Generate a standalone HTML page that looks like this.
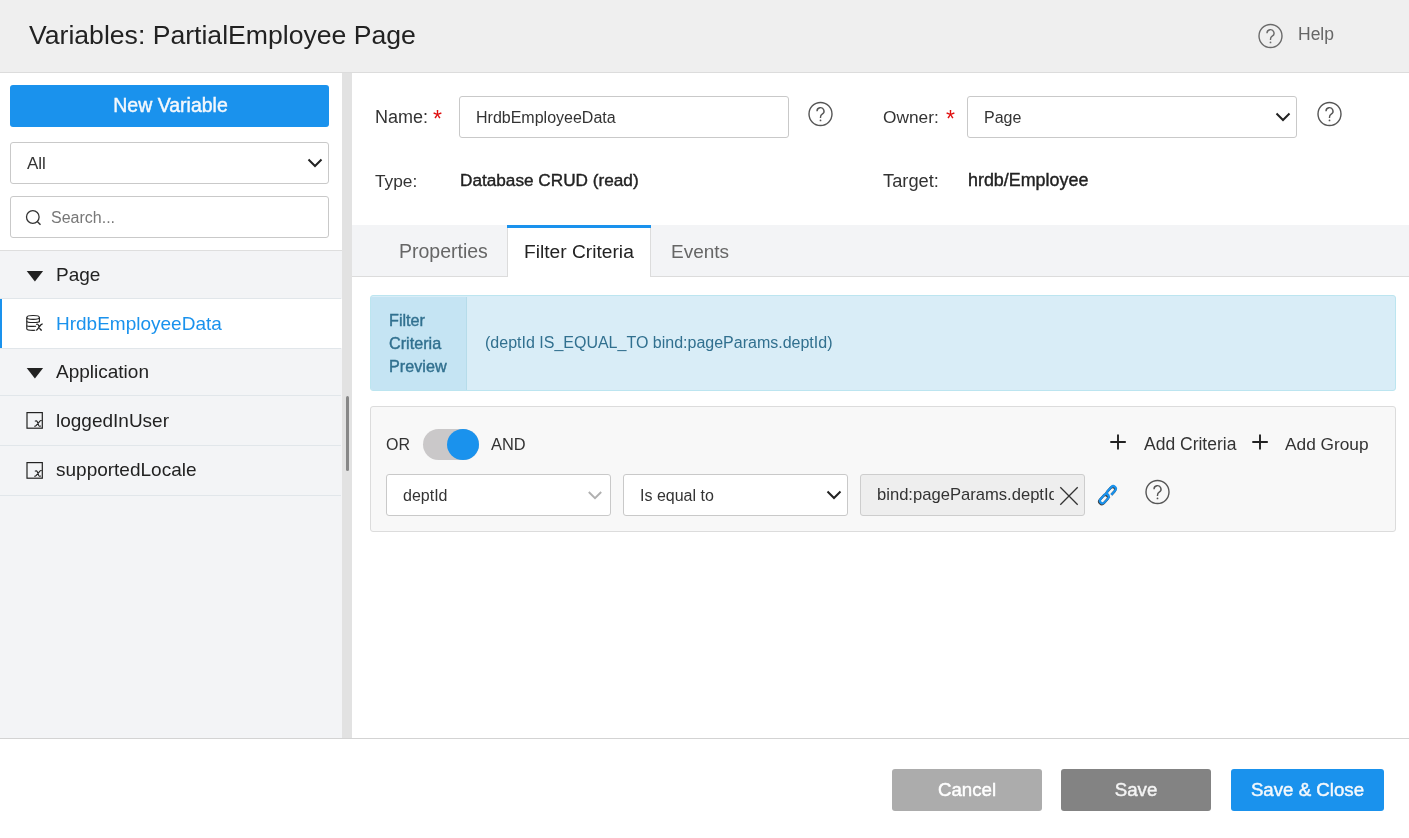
<!DOCTYPE html>
<html><head><meta charset="utf-8">
<style>
*{margin:0;padding:0;box-sizing:border-box}
html,body{width:1409px;height:838px;overflow:hidden;background:#fff;font-family:"Liberation Sans",sans-serif;color:#222}
.a{position:absolute}
.t{position:absolute;line-height:1;white-space:nowrap;will-change:transform}
</style></head><body>
<!-- header -->
<div class="a" style="left:0;top:0;width:1409px;height:73px;background:#efefef;border-bottom:1px solid #dcdcdc"></div>
<div class="t" style="left:28.5px;top:21.9px;font-size:26.6px;color:#222">Variables: PartialEmployee Page</div>
<svg class="a" style="left:1256px;top:22px" width="29" height="28" viewBox="0 0 29 28"><circle cx="14.5" cy="14" r="11.5" fill="none" stroke="#6a6a6a" stroke-width="1.4"/><path d="M11 11.2a3.5 3.5 0 1 1 5.2 3c-1.3.8-1.7 1.4-1.7 3v.8" fill="none" stroke="#6a6a6a" stroke-width="1.4"/><circle cx="14.5" cy="20.4" r="0.9" fill="#6a6a6a"/></svg>
<div class="t" style="left:1297.5px;top:26px;font-size:17.5px;color:#666">Help</div>

<!-- sidebar -->
<div class="a" style="left:10px;top:85px;width:319px;height:42px;background:#1a92ed;border-radius:3px"></div>
<div class="t" style="left:10.5px;top:95.5px;width:319px;text-align:center;font-size:19.5px;color:#f4f8fc;-webkit-text-stroke:0.45px #f4f8fc">New Variable</div>

<div class="a" style="left:10px;top:142px;width:319px;height:42px;border:1px solid #c9c9c9;border-radius:3px;background:#fff"></div>
<div class="t" style="left:26.5px;top:154.6px;font-size:17px;color:#333">All</div>
<svg class="a" style="left:306px;top:156px" width="18" height="14" viewBox="0 0 18 14"><path d="M2.5 3.5l6.5 6.5 6.5-6.5" fill="none" stroke="#222" stroke-width="2"/></svg>

<div class="a" style="left:10px;top:196px;width:319px;height:42px;border:1px solid #c9c9c9;border-radius:3px;background:#fff"></div>
<svg class="a" style="left:24px;top:208px" width="20" height="20" viewBox="0 0 20 20"><circle cx="8.8" cy="9" r="6.3" fill="none" stroke="#333" stroke-width="1.3"/><path d="M13.3 13.5l3.2 3.2" stroke="#333" stroke-width="1.4"/></svg>
<div class="t" style="left:51.4px;top:209.8px;font-size:16px;color:#777">Search...</div>

<div class="a" style="left:0;top:250px;width:342px;height:488px;background:#f3f4f6;border-top:1px solid #dedede"></div>
<!-- rows -->
<div class="a" style="left:0;top:298px;width:341px;height:1px;background:#e1e6ea"></div>
<div class="a" style="left:0;top:299px;width:342px;height:49px;background:#fff"></div>
<div class="a" style="left:0;top:299px;width:2px;height:49px;background:#1a92ed"></div>
<div class="a" style="left:0;top:348px;width:341px;height:1px;background:#e1e6ea"></div>
<div class="a" style="left:0;top:395px;width:341px;height:1px;background:#e1e6ea"></div>
<div class="a" style="left:0;top:445px;width:341px;height:1px;background:#e1e6ea"></div>
<div class="a" style="left:0;top:495px;width:341px;height:1px;background:#e1e6ea"></div>

<svg class="a" style="left:26px;top:270px" width="18" height="13" viewBox="0 0 18 13"><path d="M0.7 1h16.4l-8.2 10.6z" fill="#222"/></svg>
<div class="t" style="left:55.5px;top:264.7px;font-size:19px;color:#222">Page</div>

<svg class="a" style="left:24px;top:313px" width="22" height="20" viewBox="0 0 22 20"><g fill="none" stroke="#222" stroke-width="1.15"><ellipse cx="9.1" cy="4.4" rx="6.3" ry="1.9"/><path d="M2.8 4.4V16.1c0 .7 2.8 1.3 6.3 1.3 .8 0 1.5 0 2.2-.1"/><path d="M15.4 4.4V9.2"/><path d="M2.8 8.2c0 .7 2.8 1.3 6.3 1.3s6.3-.6 6.3-1.3"/><path d="M2.8 12.4c0 .6 2.8 1 6.3 1 1.2 0 2.2 0 3-.1"/></g><path d="M12.2 11.6c.9-.6 1.8-.5 2.3.6l1.6 3.8c.4.9 1 1.2 1.9 1.1M18.7 11.2c-.7-.2-1.3.1-2 .8l-3.3 4.3c-.4.6-.8.8-1.4.8" fill="none" stroke="#222" stroke-width="1.25"/></svg>
<div class="t" style="left:55.5px;top:313.5px;font-size:19px;color:#1a92ed">HrdbEmployeeData</div>

<svg class="a" style="left:26px;top:367px" width="18" height="13" viewBox="0 0 18 13"><path d="M0.7 1h16.4l-8.2 10.6z" fill="#222"/></svg>
<div class="t" style="left:55.5px;top:361.6px;font-size:19px;color:#222">Application</div>

<svg class="a" style="left:25px;top:411px" width="20" height="20" viewBox="0 0 20 20"><rect x="2" y="1.6" width="15.3" height="15.6" fill="none" stroke="#222" stroke-width="1.2"/><path d="M9.9 10.4C10.9 9.5 11.9 9.6 12.4 11L13.6 14.3C14 15.3 14.8 15.5 15.7 14.8M16.7 9.7C15.9 9.3 15.1 9.8 14.3 10.8L11.3 14.4C10.7 15.2 10.1 15.5 9.3 15.1" fill="none" stroke="#222" stroke-width="1.1"/></svg>
<div class="t" style="left:55.5px;top:410.8px;font-size:19px;color:#222">loggedInUser</div>

<svg class="a" style="left:25px;top:461px" width="20" height="20" viewBox="0 0 20 20"><rect x="2" y="1.6" width="15.3" height="15.6" fill="none" stroke="#222" stroke-width="1.2"/><path d="M9.9 10.4C10.9 9.5 11.9 9.6 12.4 11L13.6 14.3C14 15.3 14.8 15.5 15.7 14.8M16.7 9.7C15.9 9.3 15.1 9.8 14.3 10.8L11.3 14.4C10.7 15.2 10.1 15.5 9.3 15.1" fill="none" stroke="#222" stroke-width="1.1"/></svg>
<div class="t" style="left:55.5px;top:460px;font-size:19px;color:#222">supportedLocale</div>

<!-- divider -->
<div class="a" style="left:342px;top:73px;width:10px;height:665px;background:#e2e2e2"></div>
<div class="a" style="left:346px;top:396px;width:3.2px;height:75px;background:#878787;border-radius:1.6px"></div>

<!-- footer -->
<div class="a" style="left:0;top:738px;width:1409px;height:100px;background:#fff;border-top:1px solid #d3d3d3"></div>

<!-- main top fields -->
<div class="t" style="left:374.6px;top:108.1px;font-size:18px;color:#333">Name:</div>
<div class="t" style="left:433.2px;top:108px;font-size:23px;color:#e01010">*</div>
<div class="a" style="left:459px;top:96px;width:330px;height:42px;border:1px solid #c9c9c9;border-radius:3px;background:#fff"></div>
<div class="t" style="left:475.5px;top:110.1px;font-size:16px;color:#333">HrdbEmployeeData</div>
<svg class="a" style="left:806px;top:100px" width="29" height="28" viewBox="0 0 29 28"><circle cx="14.5" cy="14" r="11.5" fill="none" stroke="#555" stroke-width="1.4"/><path d="M11 11.2a3.5 3.5 0 1 1 5.2 3c-1.3.8-1.7 1.4-1.7 3v.8" fill="none" stroke="#555" stroke-width="1.4"/><circle cx="14.5" cy="20.4" r="0.9" fill="#555"/></svg>

<div class="t" style="left:375px;top:173.1px;font-size:17.3px;color:#333">Type:</div>
<div class="t" style="left:459.5px;top:172px;font-size:17.2px;color:#222;-webkit-text-stroke:0.4px #222">Database CRUD (read)</div>

<div class="t" style="left:883px;top:109.2px;font-size:17.3px;color:#333">Owner:</div>
<div class="t" style="left:945.6px;top:108px;font-size:23px;color:#e01010">*</div>
<div class="a" style="left:967px;top:96px;width:330px;height:42px;border:1px solid #c9c9c9;border-radius:3px;background:#fff"></div>
<div class="t" style="left:984px;top:110.1px;font-size:16px;color:#333">Page</div>
<svg class="a" style="left:1274px;top:110px" width="18" height="14" viewBox="0 0 18 14"><path d="M2.5 3.5l6.5 6.5 6.5-6.5" fill="none" stroke="#222" stroke-width="2"/></svg>
<svg class="a" style="left:1314.5px;top:100px" width="29" height="28" viewBox="0 0 29 28"><circle cx="14.5" cy="14" r="11.5" fill="none" stroke="#555" stroke-width="1.4"/><path d="M11 11.2a3.5 3.5 0 1 1 5.2 3c-1.3.8-1.7 1.4-1.7 3v.8" fill="none" stroke="#555" stroke-width="1.4"/><circle cx="14.5" cy="20.4" r="0.9" fill="#555"/></svg>

<div class="t" style="left:883px;top:172.25px;font-size:18.3px;color:#333">Target:</div>
<div class="t" style="left:967.5px;top:171.5px;font-size:17.9px;color:#222;-webkit-text-stroke:0.4px #222">hrdb/Employee</div>

<!-- tabs -->
<div class="a" style="left:352px;top:225px;width:1057px;height:52px;background:#f3f4f6;border-bottom:1px solid #dcdcdc"></div>
<div class="a" style="left:507px;top:225px;width:1px;height:52px;background:#dcdcdc"></div>
<div class="a" style="left:508px;top:225px;width:143px;height:52px;background:#fff;border-right:1px solid #dcdcdc"></div>
<div class="a" style="left:507px;top:225px;width:144px;height:3px;background:#1a92ed"></div>
<div class="t" style="left:398.5px;top:242px;font-size:19.5px;color:#666">Properties</div>
<div class="t" style="left:524px;top:241.5px;font-size:19.2px;color:#222">Filter Criteria</div>
<div class="t" style="left:670.5px;top:241.7px;font-size:19px;color:#666">Events</div>

<!-- preview -->
<div class="a" style="left:370px;top:295px;width:1026px;height:96px;background:#d9edf7;border:1px solid #bce5f0;border-radius:3px;overflow:hidden"><div class="a" style="left:0;top:1px;width:96px;height:93px;background:#c5e4f3;border-right:1px solid #b6dcea"></div></div>
<div class="t" style="left:389px;top:308.8px;font-size:16.2px;color:#31708f;-webkit-text-stroke:0.4px #31708f;line-height:22.9px">Filter<br>Criteria<br>Preview</div>
<div class="t" style="left:485px;top:334.8px;font-size:16px;color:#31708f">(deptId IS_EQUAL_TO bind:pageParams.deptId)</div>

<!-- group box -->
<div class="a" style="left:370px;top:406px;width:1026px;height:126px;background:#f8f8f8;border:1px solid #dcdcdc;border-radius:3px"></div>
<div class="t" style="left:386px;top:436.5px;font-size:16px;color:#333">OR</div>
<div class="a" style="left:423px;top:429px;width:56px;height:31px;background:#cac8c9;border-radius:16px"></div>
<div class="a" style="left:446.8px;top:428.9px;width:32.2px;height:31px;background:#1a92ed;border-radius:50%"></div>
<div class="t" style="left:491.3px;top:435.6px;font-size:16.4px;color:#333">AND</div>

<svg class="a" style="left:1108px;top:432px" width="20" height="20" viewBox="0 0 20 20"><path d="M10 2.5v15M2.3 10h15.5" stroke="#222" stroke-width="1.9"/></svg>
<div class="t" style="left:1144px;top:436px;font-size:17.5px;color:#333">Add Criteria</div>
<svg class="a" style="left:1250px;top:432px" width="20" height="20" viewBox="0 0 20 20"><path d="M10 2.5v15M2.3 10h15.5" stroke="#222" stroke-width="1.9"/></svg>
<div class="t" style="left:1285.3px;top:436px;font-size:17.3px;color:#333">Add Group</div>

<div class="a" style="left:386px;top:474px;width:225px;height:42px;border:1px solid #c9c9c9;border-radius:3px;background:#fff"></div>
<div class="t" style="left:403px;top:487.5px;font-size:16px;color:#333">deptId</div>
<svg class="a" style="left:586px;top:488px" width="18" height="14" viewBox="0 0 18 14"><path d="M2.8 4l6.2 6.2 6.2-6.2" fill="none" stroke="#b0b0b0" stroke-width="1.9"/></svg>

<div class="a" style="left:623px;top:474px;width:225px;height:42px;border:1px solid #c9c9c9;border-radius:3px;background:#fff"></div>
<div class="t" style="left:639.5px;top:487.5px;font-size:16px;color:#333">Is equal to</div>
<svg class="a" style="left:825px;top:488px" width="18" height="14" viewBox="0 0 18 14"><path d="M2.5 3.5l6.5 6.5 6.5-6.5" fill="none" stroke="#222" stroke-width="2"/></svg>

<div class="a" style="left:860px;top:474px;width:225px;height:42px;border:1px solid #cdcdcd;border-radius:3px;background:#eeeeee"></div>
<div class="a" style="left:877px;top:484px;width:177px;height:24px;overflow:hidden"><div class="t" style="left:0;top:3.2px;font-size:16.6px;color:#333">bind:pageParams.deptId</div></div>
<svg class="a" style="left:1058px;top:485px" width="22" height="22" viewBox="0 0 22 22"><path d="M2.3 2.3l17.4 17.4M19.7 2.3L2.3 19.7" stroke="#333" stroke-width="1.3"/></svg>
<svg class="a" style="left:1096px;top:482px" width="24" height="24" viewBox="0 0 24 24"><g transform="translate(11.2 13.6) rotate(-48)" fill="none" stroke="#2b2b2b" stroke-width="2.4000000000000004" opacity=".9"><rect x="-10.60" y="-2.60" width="10.60" height="5.20" rx="2.60"/><rect x="-0.00" y="-2.60" width="10.60" height="5.20" rx="2.60"/></g><g transform="translate(11.9 12.7) rotate(-48)" fill="none" stroke-width="2.2" stroke="#1a92ed"><rect x="-0.00" y="-2.60" width="10.60" height="5.20" rx="2.60"/><path d="M-0.4 2.60h2.4" stroke="#f8f8f8" stroke-width="3.4"/><rect x="-10.60" y="-2.60" width="10.60" height="5.20" rx="2.60"/></g></svg>
<svg class="a" style="left:1142.5px;top:478px" width="29" height="28" viewBox="0 0 29 28"><circle cx="14.5" cy="14" r="11.5" fill="none" stroke="#555" stroke-width="1.4"/><path d="M11 11.2a3.5 3.5 0 1 1 5.2 3c-1.3.8-1.7 1.4-1.7 3v.8" fill="none" stroke="#555" stroke-width="1.4"/><circle cx="14.5" cy="20.4" r="0.9" fill="#555"/></svg>

<!-- footer buttons -->
<div class="a" style="left:892px;top:769px;width:150px;height:42px;background:#acacac;border-radius:3px"></div>
<div class="t" style="left:892px;top:780.8px;width:150px;text-align:center;font-size:18.7px;color:#fff;-webkit-text-stroke:0.45px #fff">Cancel</div>
<div class="a" style="left:1061px;top:769px;width:150px;height:42px;background:#838383;border-radius:3px"></div>
<div class="t" style="left:1061px;top:780.8px;width:150px;text-align:center;font-size:18.7px;color:#f4f4f4;-webkit-text-stroke:0.45px #f4f4f4">Save</div>
<div class="a" style="left:1231px;top:769px;width:153px;height:42px;background:#1a92ed;border-radius:3px"></div>
<div class="t" style="left:1231px;top:780.8px;width:153px;text-align:center;font-size:18.7px;color:#f4f8fc;-webkit-text-stroke:0.45px #f4f8fc">Save &amp; Close</div>
</body></html>
